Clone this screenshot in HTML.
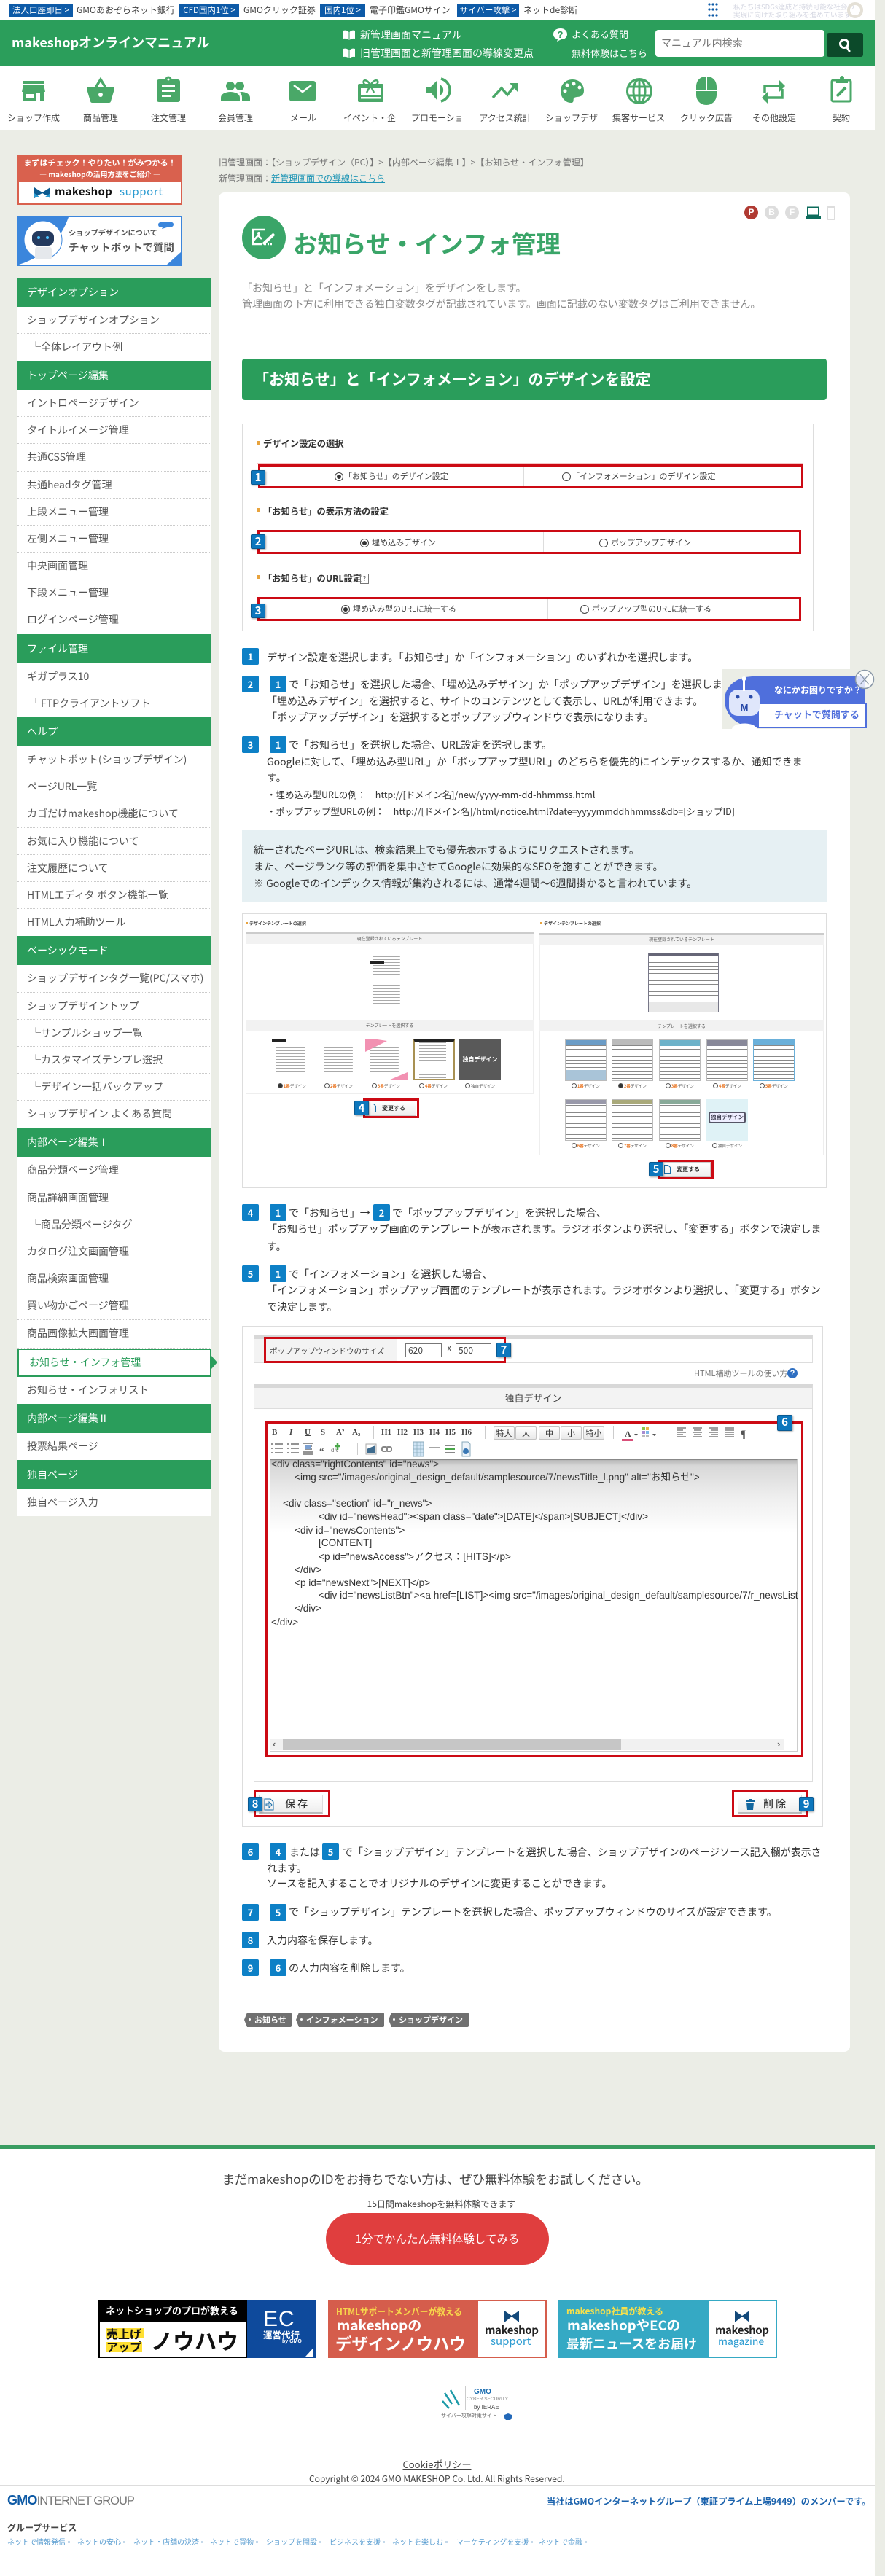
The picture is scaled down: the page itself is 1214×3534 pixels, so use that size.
<!DOCTYPE html>
<html lang="ja"><head><meta charset="utf-8"><title>お知らせ・インフォ管理</title>
<style>
html,body{margin:0;padding:0;width:1214px;height:3534px;overflow:hidden;background:#ebede6}
body{position:relative;font-family:"Noto Sans CJK JP","Liberation Sans",sans-serif;color:#444}
.a{position:absolute}
.t{position:absolute;white-space:nowrap;line-height:20px}
.box{position:absolute;box-sizing:border-box}
.tag{position:absolute;top:5px;height:18px;background:#0d5aa7;color:#fff;font-size:11.500px;line-height:18px;text-align:center;white-space:nowrap}
.gl{position:absolute;top:4px;font-size:12px;line-height:20px;color:#444;white-space:nowrap}
.nl{position:absolute;top:152px;width:72px;height:20px;overflow:hidden;text-align:center;font-size:12px;line-height:20px;color:#444;white-space:nowrap}
#side{position:absolute;left:24px;top:381px;width:266px;font-size:14px}
#side .h{height:40px;line-height:40px;background:#2a9d5b;color:#fff;padding-left:13px}
#side .i{height:37.2px;line-height:36px;background:#fff;color:#555;padding-left:13px;border-bottom:1px dotted #ccc;box-sizing:border-box;white-space:nowrap}
#side .s{padding-left:18px}
#side .e{border-bottom:0}
#side .on{height:39px;line-height:35px;border:2px solid #2a9d5b;padding-left:14px;color:#2a9d5b;position:relative;margin-top:1.800px}
.bd{position:absolute;width:23px;height:23px;background:#0d80c6;color:#fff;font-size:13px;font-weight:700;line-height:23px;text-align:center;border-radius:2px}
.l{position:absolute;white-space:nowrap;font-size:14px;line-height:22px;color:#333}
.ib{position:absolute;box-sizing:border-box;width:20px;height:20px;background:#0d77bd;border:1px solid #0a5a92;box-shadow:1px 1px 2px rgba(0,0,0,.35);color:#fff;font-weight:700;font-size:15px;line-height:18px;text-align:center;border-radius:2px}
.rb{position:absolute;box-sizing:border-box;border:3px solid #cc0a14;pointer-events:none}
.r{position:absolute;width:12px;height:12px;box-sizing:border-box;border:1px solid #444;border-radius:50%;background:#fff}
.r.c:after{content:"";position:absolute;left:2px;top:2px;width:6px;height:6px;background:#333;border-radius:50%}
.f{position:absolute;white-space:nowrap;font-size:11px;line-height:18px;color:#444}
.sl{position:absolute;white-space:nowrap;font-size:12.300px;font-weight:700;line-height:18px;color:#333}
.sq{position:absolute;width:5px;height:5px;background:#e8a33d}
.th{position:absolute;width:57px;height:57px;box-sizing:border-box;background:#fff repeating-linear-gradient(#aaa 0 1px,#fff 1px 4px);background-size:70% 100%;background-repeat:no-repeat;background-position:6px 0}
.pp{position:absolute;width:57px;height:57px;box-sizing:border-box;border:1px solid #bbb;background:repeating-linear-gradient(#fff 0 2px,#888 2px 3px,#fff 3px 5px)}
.pp i{position:absolute;left:0;right:0;top:0;height:6px;background:#9a9}
.pp u{position:absolute;left:0;right:0;bottom:0;height:8px;background:#ddd}
.ps{position:absolute;white-space:nowrap;font-size:5.500px;line-height:10px;color:#555}
.ps b{color:#e8701a}
.ps:before{content:"";display:inline-block;width:5px;height:5px;border:1px solid #555;border-radius:50%;margin-right:1px;vertical-align:-1px}
.ps.c:before{background:#333}
.gh{position:absolute;background:linear-gradient(#ccc 0,#ccc 3px,#f2f2f2 3px);font-size:6px;line-height:18px;text-align:center;color:#555}
.tb{position:absolute;top:0;font-size:11px;line-height:14px;color:#444;white-space:nowrap;font-family:"Liberation Serif",serif;font-weight:700}
.zb{position:absolute;box-sizing:border-box;height:18px;border:1px solid #c4c4c4;background:linear-gradient(#fff,#e9e9e9);border-radius:2px;font-size:11px;line-height:16px;text-align:center;color:#333;font-family:"Noto Sans CJK JP",sans-serif}
.sp{position:absolute;width:1px;height:17px;background:#ccc}
.code{position:absolute;white-space:nowrap;font-family:"Liberation Sans","Noto Sans CJK JP",sans-serif;font-size:13.600px;line-height:18px;color:#333}
.tg{position:absolute;top:2761px;height:20px;background:#707070;color:#fff;font-size:11px;font-weight:700;line-height:20px;padding-left:14px;box-sizing:border-box;white-space:nowrap;clip-path:polygon(4px 0,100% 0,100% 100%,4px 100%,0 50%);border-radius:2px}
.tg:before{content:"";position:absolute;left:6px;top:8px;width:3px;height:3px;background:#fff;border-radius:50%}
.lk{position:absolute;top:3477px;font-size:10px;line-height:20px;color:#5b9ed1;white-space:nowrap}
.lk:after{content:"";display:inline-block;width:3px;height:3px;background:#c5d9ea;margin-left:3px;vertical-align:2px}
</style></head><body>

<!-- GMO bar -->
<div class="box" style="left:0;top:0;width:1200px;height:28px;background:#fff"></div>
<div class="tag" style="left:12px;width:88px">法人口座即日 &gt;</div><div class="gl" style="left:105px">GMOあおぞらネット銀行</div>
<div class="tag" style="left:246px;width:82px">CFD国内1位 &gt;</div><div class="gl" style="left:334px">GMOクリック証券</div>
<div class="tag" style="left:439px;width:62px">国内1位 &gt;</div><div class="gl" style="left:507px">電子印鑑GMOサイン</div>
<div class="tag" style="left:627px;width:85px">サイバー攻撃 &gt;</div><div class="gl" style="left:718px">ネットde診断</div>
<svg class="a" style="left:970px;top:3px" width="18" height="22" fill="#0d5aa7"><circle cx="3" cy="3" r="1.600"/><circle cx="8" cy="3" r="1.600"/><circle cx="13" cy="3" r="1.600"/><circle cx="3" cy="10" r="1.600"/><circle cx="8" cy="10" r="1.600"/><circle cx="13" cy="10" r="1.600"/><circle cx="3" cy="18" r="1.600"/><circle cx="8" cy="18" r="1.600"/><circle cx="13" cy="18" r="1.600"/></svg>
<div class="a" style="left:1006px;top:4px;font-size:9.500px;line-height:11px;color:#d5d7e2;white-space:nowrap">私たちはSDGs達成と持続可能な社会の<br>実現に向けた取り組みを進めています</div>
<div class="a" style="left:1162px;top:3px;width:22px;height:22px;border-radius:50%;box-sizing:border-box;border:4px solid #e4e0d6"></div>

<!-- Green header -->
<div class="box" style="left:0;top:28px;width:1200px;height:62px;background:#2b9e5b"></div>
<div class="t" style="left:16px;top:48px;font-size:18px;font-weight:700;color:#fff">makeshopオンラインマニュアル</div>
<svg class="a" style="left:470px;top:40px" width="18" height="16" fill="#fff"><path d="M1 2C4 1 7 2 8.500 4V15C7 13 4 12.500 1 13ZM17 2C14 1 11 2 9.500 4V15C11 13 14 12.500 17 13Z"/></svg>
<svg class="a" style="left:470px;top:65px" width="18" height="16" fill="#fff"><path d="M1 2C4 1 7 2 8.500 4V15C7 13 4 12.500 1 13ZM17 2C14 1 11 2 9.500 4V15C11 13 14 12.500 17 13Z"/></svg>
<div class="t" style="left:494px;top:38px;font-size:14px;color:#fff">新管理画面マニュアル</div>
<div class="t" style="left:494px;top:63px;font-size:14px;color:#fff">旧管理画面と新管理画面の導線変更点</div>
<svg class="a" style="left:758px;top:38px" width="22" height="20"><path d="M11 1C5 1 1 4 1 9C1 13 4 15 7 16L6 19L12 16C17 16 20 13 20 9C20 4 16 1 11 1Z" fill="#fff"/><text x="10.500" y="14" font-size="13" font-weight="700" text-anchor="middle" fill="#2b9e5b" font-family="Liberation Sans">?</text></svg>
<div class="t" style="left:784px;top:37px;font-size:13px;color:#fff">よくある質問</div>
<div class="t" style="left:784px;top:63px;font-size:13px;color:#fff">無料体験はこちら</div>
<div class="box" style="left:899px;top:41px;width:232px;height:37px;background:#fff;border-radius:4px;font-size:14px;line-height:37px;padding-left:8px;color:#777">マニュアル内検索</div>
<div class="box" style="left:1134px;top:45px;width:50px;height:33px;background:#0c4a2a;border-radius:3px"></div>
<svg class="a" style="left:1149px;top:52px" width="20" height="20" fill="none" stroke="#fff" stroke-width="3"><circle cx="9" cy="8" r="5.500"/><path d="M12.500 12.500L16 18" stroke-linecap="round"/></svg>

<!-- Nav -->
<div class="box" style="left:0;top:90px;width:1200px;height:89px;background:#fff"></div>
<svg class="a" style="left:0;top:0" width="1200" height="150" fill="#4aa868">
<rect x="32" y="111" width="28" height="4"/><path d="M32 116H60L62 126H30Z"/><path d="M32 126H60V139H55V128H49V139H32ZM35 129V134H46V129Z" fill-rule="evenodd"/>
<path d="M130 122L138 109L146 122" fill="none" stroke="#4aa868" stroke-width="3.500"/><path d="M120 120H156C157 120 157 121 157 122L152 139C151.500 140.500 151 141 149 141H127C125 141 124.500 140.500 124 139L119 122C119 121 119 120 120 120Z"/><circle cx="138" cy="130" r="3" fill="#fff"/>
<rect x="215" y="109" width="32" height="31" rx="3"/><circle cx="231" cy="109" r="4.500"/><circle cx="231" cy="109" r="1.500" fill="#fff"/><g fill="#fff"><rect x="222" y="116" width="18" height="3"/><rect x="222" y="123" width="18" height="3"/><rect x="222" y="130" width="12" height="3"/></g>
<circle cx="316" cy="118" r="6"/><circle cx="329" cy="118" r="6"/><path d="M303 138V134C303 128 311 126 316 126C321 126 329 128 329 134V138Z"/><path d="M331 126C337 126 343 129 343 134V138H332V134C332 131 331 128 328 127Z"/>
<rect x="397" y="111" width="36" height="28" rx="3"/><path d="M403 117L415 126L427 117" fill="none" stroke="#fff" stroke-width="2.500"/>
<rect x="491" y="115" width="35" height="25" rx="2"/><rect x="495" y="121" width="27" height="9" fill="#fff"/><rect x="495" y="133" width="27" height="2.500" fill="#fff"/><path d="M508 117C504 108 497 109 499 114C500 117 504 117 508 117C512 117 517 117 518 114C520 109 513 108 508 117ZM508 117L503 127M508 117L513 127" fill="none" stroke="#4aa868" stroke-width="2.500"/>
<path d="M584 119H591L600 110V138L591 127H584Z"/><path d="M603 116A8 8 0 0 1 603 131Z"/><path d="M605 108A16 16 0 0 1 605 139" fill="none" stroke="#4aa868" stroke-width="3.500"/>
<path d="M676 134L688 121L696 130L706 118" fill="none" stroke="#4aa868" stroke-width="3.500"/><path d="M699 114H710V126Z"/>
<path d="M785 109C776 109 769 116 769 125C769 134 776 141 783 141C788 141 786 137 787 135C789 131 801 136 801 124C801 115 794 109 785 109Z"/><g fill="#fff"><circle cx="778" cy="117" r="2.500"/><circle cx="787" cy="115" r="2.500"/><circle cx="795" cy="120" r="2.500"/><circle cx="775" cy="125" r="2.500"/></g>
<g fill="none" stroke="#4aa868" stroke-width="3"><circle cx="877" cy="125" r="16.500"/><ellipse cx="877" cy="125" rx="8" ry="16"/><path d="M861 119H893M861 131H893M877 109V141"/></g>
<path d="M968 105C960 105 955 111 955 119V123H968ZM970 105C978 105 983 111 983 119V123H970ZM955 125H983V130C983 138 977 144 969 144C961 144 955 138 955 130Z"/>
<path d="M1049 128V118H1069M1073 122V134H1052" fill="none" stroke="#4aa868" stroke-width="3.500"/><path d="M1068 109L1077 118L1068 127ZM1054 125L1045 134L1054 143Z"/>
<rect x="1141" y="110" width="26" height="29" rx="2" fill="none" stroke="#4aa868" stroke-width="3"/><rect x="1147" y="108" width="16" height="6"/><circle cx="1155" cy="107" r="3"/><path d="M1148 132L1160 120" stroke="#4aa868" stroke-width="4"/>
</svg>
<div class="nl" style="left:10px">ショップ作成</div><div class="nl" style="left:102px">商品管理</div><div class="nl" style="left:195px">注文管理</div><div class="nl" style="left:287px">会員管理</div><div class="nl" style="left:380px">メール</div><div class="nl" style="left:471px">イベント・企画</div><div class="nl" style="left:564px">プロモーション</div><div class="nl" style="left:657px">アクセス統計</div><div class="nl" style="left:748px">ショップデザイン</div><div class="nl" style="left:840px">集客サービス</div><div class="nl" style="left:933px">クリック広告</div><div class="nl" style="left:1026px">その他設定</div><div class="nl" style="left:1118px">契約</div>

<!-- Left banners -->
<div class="box" style="left:24px;top:212px;width:226px;height:69px;background:#d9614e"></div>
<div class="t" style="left:24px;width:226px;text-align:center;top:213px;font-size:11px;font-weight:700;color:#fff">まずはチェック！やりたい！がみつかる！</div>
<div class="t" style="left:24px;width:226px;text-align:center;top:229px;font-size:10px;font-weight:700;color:#fff">― makeshopの活用方法をご紹介 ―</div>
<div class="box" style="left:26px;top:250px;width:222px;height:29px;background:#fff"></div>
<svg class="a" style="left:46px;top:256px" width="24" height="16"><path d="M1 1L12 8L23 1V15L12 9L1 15Z" fill="#0d5a8f"/><path d="M1 9L8 14H1ZM23 9L16 14H23Z" fill="#2b9bd1"/></svg>
<div class="t" style="left:75px;top:253px;font-size:15px;font-weight:700;color:#111;letter-spacing:.3px">makeshop</div>
<div class="t" style="left:164px;top:253px;font-size:15px;color:#2b9bd1;letter-spacing:.6px">support</div>
<div class="box" style="left:24px;top:296px;width:226px;height:69px;background:#fff;border:2px solid #3b86dc"></div>
<svg class="a" style="left:24px;top:296px" width="226" height="69"><path d="M2 2H70C60 30 40 55 2 67Z" fill="#3b86dc"/><path d="M205 67L224 50V67Z" fill="#3b86dc"/><circle cx="35" cy="33" r="26" fill="#fff" stroke="#3b86dc" stroke-width="1"/><rect x="20" y="21" width="30" height="20" rx="8" fill="#243a5e"/><circle cx="29" cy="30" r="2" fill="#4cc4ff"/><circle cx="41" cy="30" r="2" fill="#4cc4ff"/><rect x="24" y="43" width="23" height="17" rx="3" fill="#e5e8ec"/><path d="M193 12C193 9 197 8 205 8C213 8 214 10 214 12C214 15 211 16 205 16L198 18L199 16C195 16 193 15 193 12Z" fill="#3b86dc"/></svg>
<div class="t" style="left:94px;top:309px;font-size:10.200px;font-weight:700;color:#555">ショップデザインについて</div>
<div class="t" style="left:94px;top:330px;font-size:14.500px;font-weight:700;color:#555">チャットボットで質問</div>

<!-- Sidebar -->
<div id="side">
<div class="h">デザインオプション</div><div class="i">ショップデザインオプション</div><div class="i s e">└全体レイアウト例</div>
<div class="h" style="height:39.600px">トップページ編集</div><div class="i">イントロページデザイン</div><div class="i">タイトルイメージ管理</div><div class="i">共通CSS管理</div><div class="i">共通headタグ管理</div><div class="i">上段メニュー管理</div><div class="i">左側メニュー管理</div><div class="i">中央画面管理</div><div class="i">下段メニュー管理</div><div class="i e">ログインページ管理</div>
<div class="h">ファイル管理</div><div class="i">ギガプラス10</div><div class="i s e">└FTPクライアントソフト</div>
<div class="h">ヘルプ</div><div class="i">チャットボット(ショップデザイン)</div><div class="i">ページURL一覧</div><div class="i">カゴだけmakeshop機能について</div><div class="i">お気に入り機能について</div><div class="i">注文履歴について</div><div class="i">HTMLエディタ ボタン機能一覧</div><div class="i e">HTML入力補助ツール</div>
<div class="h">ベーシックモード</div><div class="i">ショップデザインタグ一覧(PC/スマホ)</div><div class="i">ショップデザイントップ</div><div class="i s">└サンプルショップ一覧</div><div class="i s">└カスタマイズテンプレ選択</div><div class="i s">└デザイン一括バックアップ</div><div class="i e">ショップデザイン よくある質問</div>
<div class="h">内部ページ編集Ⅰ</div><div class="i">商品分類ページ管理</div><div class="i">商品詳細画面管理</div><div class="i s">└商品分類ページタグ</div><div class="i">カタログ注文画面管理</div><div class="i">商品検索画面管理</div><div class="i">買い物かごページ管理</div><div class="i" style="height:39px">商品画像拡大画面管理</div>
<div class="i on" style="margin-top:0">お知らせ・インフォ管理<div class="a" style="left:264px;top:8px;width:0;height:0;border-left:8px solid #2a9d5b;border-top:9px solid transparent;border-bottom:9px solid transparent"></div></div>
<div class="i e">お知らせ・インフォリスト</div>
<div class="h">内部ページ編集Ⅱ</div><div class="i e">投票結果ページ</div>
<div class="h">独自ページ</div><div class="i e">独自ページ入力</div>
</div>

<!-- Main card -->
<div class="t" style="left:300px;top:213px;font-size:12px;color:#777">旧管理画面：【ショップデザイン（PC）】&gt;【内部ページ編集Ⅰ】&gt;【お知らせ・インフォ管理】</div>
<div class="t" style="left:300px;top:235px;font-size:12px;color:#777">新管理画面：<span style="color:#1e95b5;text-decoration:underline">新管理画面での導線はこちら</span></div>
<div class="box" style="left:300px;top:264px;width:866px;height:2551px;background:#fff;border-radius:8px"></div>

<div class="a" style="left:1021px;top:282px;width:19px;height:19px;border-radius:50%;background:#b03a32;color:#fff;font:700 12px/19px 'Liberation Sans',sans-serif;text-align:center">P</div>
<div class="a" style="left:1049px;top:282px;width:19px;height:19px;border-radius:50%;background:#ddd;color:#fff;font:700 12px/19px 'Liberation Sans',sans-serif;text-align:center">B</div>
<div class="a" style="left:1077px;top:282px;width:19px;height:19px;border-radius:50%;background:#ddd;color:#fff;font:700 12px/19px 'Liberation Sans',sans-serif;text-align:center">F</div>
<svg class="a" style="left:1105px;top:283px" width="21" height="18"><rect x="3" y="1.500" width="15" height="11" fill="#fff" stroke="#0e6c5c" stroke-width="2"/><path d="M0 14H21V18H0Z" fill="#0e6c5c"/></svg>
<div class="box" style="left:1134px;top:283px;width:12px;height:19px;background:#fff;border:2px solid #ddd;border-radius:2px"></div>

<div class="a" style="left:332px;top:296px;width:60px;height:60px;border-radius:50%;background:#3aa568"></div>
<svg class="a" style="left:345px;top:313px" width="34" height="26" fill="none" stroke="#fff" stroke-width="2.500"><path d="M19 2H2V22H14"/><path d="M2 18L9 10L14 15"/><circle cx="10" cy="7" r="2" fill="#fff" stroke="none"/><path d="M16 22L31 8" stroke-width="4"/><path d="M18 22H24M26 22H28" stroke-dasharray="2 2"/></svg>
<div class="a" style="left:402px;top:308px;font-size:33.500px;font-weight:700;line-height:50px;color:#3aa568;white-space:nowrap">お知らせ・インフォ管理</div>

<div class="t" style="left:332px;top:385px;font-size:14px;color:#888">「お知らせ」と「インフォメーション」をデザインをします。</div>
<div class="t" style="left:332px;top:407px;font-size:14px;color:#888">管理画面の下方に利用できる独自変数タグが記載されています。画面に記載のない変数タグはご利用できません。</div>

<div class="box" style="left:332px;top:492px;width:802px;height:57px;background:#2a9d5b;border-radius:4px"></div>
<div class="a" style="left:348px;top:500px;font-size:21px;font-weight:700;line-height:40px;color:#fff;white-space:nowrap">「お知らせ」と「インフォメーション」のデザインを設定</div>

<!-- Screenshot 1 -->
<div class="box" style="left:332px;top:581px;width:784px;height:285px;border:1px solid #ddd"></div>
<div class="sq" style="left:352px;top:605px"></div><div class="sl" style="left:361px;top:599px">デザイン設定の選択</div>
<div class="sq" style="left:352px;top:697px"></div><div class="sl" style="left:361px;top:692px">「お知らせ」の表示方法の設定</div>
<div class="sq" style="left:352px;top:789px"></div><div class="sl" style="left:361px;top:784px">「お知らせ」のURL設定</div>
<div class="box" style="left:494px;top:787px;width:12px;height:14px;border:1px solid #777;font-size:9px;line-height:12px;text-align:center;color:#555">?</div>
<div class="box" style="left:352px;top:635px;width:749px;height:2px;background:#f5c5c5"></div>
<div class="rb" style="left:354px;top:637px;width:748px;height:33px"></div>
<div class="box" style="left:718px;top:640px;width:1px;height:27px;background:#ddd"></div>
<div class="r c" style="left:459px;top:648px"></div><div class="f" style="left:472px;top:644px">「お知らせ」のデザイン設定</div>
<div class="r" style="left:771px;top:648px"></div><div class="f" style="left:784px;top:644px">「インフォメーション」のデザイン設定</div>
<div class="rb" style="left:353px;top:727px;width:746px;height:33px"></div>
<div class="box" style="left:745px;top:730px;width:1px;height:27px;background:#ddd"></div>
<div class="r c" style="left:494px;top:739px"></div><div class="f" style="left:510px;top:735px">埋め込みデザイン</div>
<div class="r" style="left:822px;top:739px"></div><div class="f" style="left:838px;top:735px">ポップアップデザイン</div>
<div class="rb" style="left:353px;top:819px;width:746px;height:33px"></div>
<div class="box" style="left:751px;top:822px;width:1px;height:27px;background:#ddd"></div>
<div class="r c" style="left:468px;top:830px"></div><div class="f" style="left:484px;top:826px">埋め込み型のURLに統一する</div>
<div class="r" style="left:796px;top:830px"></div><div class="f" style="left:812px;top:826px">ポップアップ型のURLに統一する</div>
<div class="ib" style="left:344px;top:645px">1</div><div class="ib" style="left:344px;top:733px">2</div><div class="ib" style="left:344px;top:828px">3</div>

<!-- Steps 1-3 -->
<div class="bd" style="left:332px;top:889px">1</div><div class="l" style="left:366px;top:891px">デザイン設定を選択します。「お知らせ」か「インフォメーション」のいずれかを選択します。</div>
<div class="bd" style="left:332px;top:927px">2</div><div class="bd" style="left:370px;top:927px">1</div><div class="l" style="left:396px;top:928px">で「お知らせ」を選択した場合、「埋め込みデザイン」か「ポップアップデザイン」を選択します。</div>
<div class="l" style="left:366px;top:951px">「埋め込みデザイン」を選択すると、サイトのコンテンツとして表示し、URLが利用できます。</div>
<div class="l" style="left:366px;top:973px">「ポップアップデザイン」を選択するとポップアップウィンドウで表示になります。</div>
<div class="bd" style="left:332px;top:1010px">3</div><div class="bd" style="left:370px;top:1010px">1</div><div class="l" style="left:396px;top:1011px">で「お知らせ」を選択した場合、URL設定を選択します。</div>
<div class="l" style="left:366px;top:1034px">Googleに対して、「埋め込み型URL」か「ポップアップ型URL」のどちらを優先的にインデックスするか、通知できま</div>
<div class="l" style="left:366px;top:1056px">す。</div>
<div class="l" style="left:366px;top:1079px;font-size:12.500px">・埋め込み型URLの例：　http://[ドメイン名]/new/yyyy-mm-dd-hhmmss.html</div>
<div class="l" style="left:366px;top:1102px;font-size:12.500px">・ポップアップ型URLの例：　http://[ドメイン名]/html/notice.html?date=yyyymmddhhmmss&amp;db=[ショップID]</div>
<div class="box" style="left:332px;top:1138px;width:802px;height:99px;background:#e6f0f3"></div>
<div class="l" style="left:348px;top:1155px">統一されたページURLは、検索結果上でも優先表示するようにリクエストされます。</div>
<div class="l" style="left:348px;top:1178px">また、ページランク等の評価を集中させてGoogleに効果的なSEOを施すことができます。</div>
<div class="l" style="left:348px;top:1201px">※ Googleでのインデックス情報が集約されるには、通常4週間～6週間掛かると言われています。</div>

<!-- Screenshot 2 -->
<div class="box" style="left:332px;top:1253px;width:802px;height:377px;border:1px solid #ddd"></div>
<div class="sq" style="left:337px;top:1265px;width:3px;height:3px"></div><div class="a" style="left:342px;top:1261px;font-size:6px;font-weight:700;line-height:12px;white-space:nowrap;color:#444">デザインテンプレートの選択</div>
<div class="sq" style="left:741px;top:1265px;width:3px;height:3px"></div><div class="a" style="left:746px;top:1261px;font-size:6px;font-weight:700;line-height:12px;white-space:nowrap;color:#444">デザインテンプレートの選択</div>
<div class="box" style="left:337px;top:1279px;width:395px;height:222px;border:1px solid #eee"></div>
<div class="gh" style="left:337px;top:1279px;width:395px;height:16px">現在登録されているテンプレート</div>
<div class="gh" style="left:337px;top:1399px;width:395px;height:15px;background:#f2f2f2;line-height:15px">テンプレートを選択する</div>
<div class="th" style="left:505px;top:1312px;width:54px;height:65px"></div>
<div class="box" style="left:507px;top:1319px;width:20px;height:3px;background:#222"></div>
<div class="th" style="left:373px;top:1425px"></div><div class="box" style="left:373px;top:1426px;width:20px;height:3px;background:#222"></div>
<div class="th" style="left:438px;top:1425px"></div>
<div class="th" style="left:501px;top:1425px"></div><svg class="a" style="left:501px;top:1425px" width="58" height="57"><path d="M0 0H10L30 3L0 18Z" fill="#f291b2"/><path d="M58 46V57H32Z" fill="#f291b2"/></svg>
<div class="th" style="left:567px;top:1425px;border:2px solid #a89153;border-top:5px solid #222"></div>
<div class="box" style="left:630px;top:1425px;width:57px;height:57px;background:#595959;color:#fff;font-size:8px;font-weight:700;line-height:57px;text-align:center;white-space:nowrap">独自デザイン</div>
<div class="ps c" style="left:381px;top:1485px"><b>1番</b>デザイン</div><div class="ps" style="left:445px;top:1485px"><b>2番</b>デザイン</div><div class="ps" style="left:510px;top:1485px"><b>3番</b>デザイン</div><div class="ps" style="left:575px;top:1485px"><b>4番</b>デザイン</div><div class="ps" style="left:638px;top:1485px">独自デザイン</div>
<div class="box" style="left:501px;top:1510px;width:70px;height:21px;background:linear-gradient(#fff,#eee);border:1px solid #ccc;font-size:8px;font-weight:700;line-height:19px;padding-left:22px;white-space:nowrap;color:#333">変更する</div>
<svg class="a" style="left:507px;top:1514px" width="9" height="12" fill="none" stroke="#1b6ea8"><path d="M.5.5h5l3 3v8h-8z"/></svg>
<div class="rb" style="left:498px;top:1507px;width:77px;height:27px"></div>
<div class="ib" style="left:486px;top:1510px">4</div>

<div class="box" style="left:740px;top:1280px;width:390px;height:305px;border:1px solid #eee"></div>
<div class="gh" style="left:740px;top:1280px;width:390px;height:16px">現在登録されているテンプレート</div>
<div class="gh" style="left:740px;top:1400px;width:390px;height:15px;background:#f2f2f2;line-height:15px">テンプレートを選択する</div>
<div class="pp" style="left:889px;top:1307px;width:97px;height:82px;border:1px solid #778"><i style="background:#667;height:4px"></i><u style="height:14px;background:#e8e8e8"></u></div>
<div class="pp" style="left:775px;top:1426px"><i style="background:#6b9cc6;height:7px"></i><u style="background:#a9c4d8;height:14px"></u></div>
<div class="pp" style="left:839px;top:1426px"><i style="background:#bbb"></i></div>
<div class="pp" style="left:904px;top:1426px"><i style="background:#6db2c9;height:8px"></i></div>
<div class="pp" style="left:969px;top:1426px"><i style="background:#889;height:8px"></i></div>
<div class="pp" style="left:1033px;top:1426px;border-color:#6ab0da"><i style="background:#6ab0da"></i></div>
<div class="ps" style="left:784px;top:1485px"><b>1番</b>デザイン</div><div class="ps c" style="left:848px;top:1485px"><b>2番</b>デザイン</div><div class="ps" style="left:913px;top:1485px"><b>3番</b>デザイン</div><div class="ps" style="left:978px;top:1485px"><b>4番</b>デザイン</div><div class="ps" style="left:1042px;top:1485px"><b>5番</b>デザイン</div>
<div class="pp" style="left:775px;top:1508px"><i style="background:#99a"></i></div>
<div class="pp" style="left:839px;top:1508px"><i style="background:#a9a97a"></i></div>
<div class="pp" style="left:904px;top:1508px"><i style="background:#8a9"></i></div>
<div class="box" style="left:969px;top:1508px;width:57px;height:57px;background:#dff2f6"></div>
<div class="box" style="left:972px;top:1525px;width:51px;height:16px;background:#eef;border:2px solid #556;border-radius:3px;font-size:7.500px;font-weight:700;line-height:12px;text-align:center;color:#445;white-space:nowrap">独自デザイン</div>
<div class="ps" style="left:784px;top:1567px"><b>6番</b>デザイン</div><div class="ps" style="left:848px;top:1567px"><b>7番</b>デザイン</div><div class="ps" style="left:913px;top:1567px"><b>8番</b>デザイン</div><div class="ps" style="left:977px;top:1567px">独自デザイン</div>
<div class="box" style="left:905px;top:1594px;width:70px;height:21px;background:linear-gradient(#fff,#eee);border:1px solid #ccc;font-size:8px;font-weight:700;line-height:19px;padding-left:22px;white-space:nowrap;color:#333">変更する</div>
<svg class="a" style="left:911px;top:1598px" width="9" height="12" fill="none" stroke="#1b6ea8"><path d="M.5.5h5l3 3v8h-8z"/></svg>
<div class="rb" style="left:902px;top:1591px;width:77px;height:27px"></div>
<div class="ib" style="left:890px;top:1594px">5</div>

<!-- Steps 4-5 -->
<div class="bd" style="left:332px;top:1652px">4</div><div class="bd" style="left:370px;top:1652px">1</div><div class="l" style="left:396px;top:1653px">で「お知らせ」→</div><div class="bd" style="left:512px;top:1652px">2</div><div class="l" style="left:538px;top:1653px">で「ポップアップデザイン」を選択した場合、</div>
<div class="l" style="left:366px;top:1675px">「お知らせ」ポップアップ画面のテンプレートが表示されます。ラジオボタンより選択し、「変更する」ボタンで決定しま</div>
<div class="l" style="left:366px;top:1699px">す。</div>
<div class="bd" style="left:332px;top:1736px">5</div><div class="bd" style="left:370px;top:1736px">1</div><div class="l" style="left:396px;top:1737px">で「インフォメーション」を選択した場合、</div>
<div class="l" style="left:366px;top:1759px">「インフォメーション」ポップアップ画面のテンプレートが表示されます。ラジオボタンより選択し、「変更する」ボタン</div>
<div class="l" style="left:366px;top:1782px">で決定します。</div>

<!-- Screenshot 3 -->
<div class="box" style="left:332px;top:1819px;width:797px;height:687px;border:1px solid #ddd"></div>
<div class="box" style="left:348px;top:1832px;width:767px;height:38px;border:1px solid #ddd;border-top:5px solid #d8d8d8"></div>
<div class="box" style="left:349px;top:1837px;width:195px;height:32px;background:#f3f3f3"></div>
<div class="f" style="left:370px;top:1845px;font-size:10.500px">ポップアップウィンドウのサイズ</div>
<div class="box" style="left:556px;top:1843px;width:50px;height:19px;border:1px solid #777;font:12px/17px 'Noto Sans CJK JP',sans-serif;padding-left:3px">620</div>
<div class="f" style="left:613px;top:1841px">X</div>
<div class="box" style="left:625px;top:1843px;width:49px;height:19px;border:1px solid #777;font:12px/17px 'Noto Sans CJK JP',sans-serif;padding-left:3px">500</div>
<div class="rb" style="left:362px;top:1834px;width:332px;height:36px"></div>
<div class="ib" style="left:681px;top:1842px">7</div>
<div class="a" style="left:952px;top:1875px;font-size:11px;line-height:18px;color:#777;white-space:nowrap">HTML補助ツールの使い方</div>
<div class="a" style="left:1080px;top:1877px;width:14px;height:14px;border-radius:50%;background:#2e6fc2;color:#fff;font:700 11px/14px 'Liberation Sans',sans-serif;text-align:center">?</div>
<div class="box" style="left:348px;top:1899px;width:767px;height:546px;border:1px solid #ddd;border-top:5px solid #d8d8d8"></div>
<div class="box" style="left:349px;top:1904px;width:765px;height:29px;background:#f3f3f3;border-bottom:1px solid #ddd;font-size:13px;line-height:28px;text-align:center;color:#444">独自デザイン</div>

<!-- Toolbar -->
<div class="a" style="left:364px;top:1958px;width:738px;height:14px">
<span class="tb" style="left:9px">B</span><span class="tb" style="left:33px;font-style:italic">I</span><span class="tb" style="left:54px;text-decoration:underline">U</span><span class="tb" style="left:76px;text-decoration:line-through">S</span><span class="tb" style="left:97px">A²</span><span class="tb" style="left:119px">A₂</span>
<span class="tb" style="left:159px">H1</span><span class="tb" style="left:181px">H2</span><span class="tb" style="left:203px">H3</span><span class="tb" style="left:225px">H4</span><span class="tb" style="left:247px">H5</span><span class="tb" style="left:269px">H6</span>
</div>
<div class="sp" style="left:512px;top:1957px"></div><div class="sp" style="left:665px;top:1957px"></div><div class="sp" style="left:841px;top:1957px"></div><div class="sp" style="left:916px;top:1957px"></div>
<div class="sp" style="left:490px;top:1979px"></div><div class="sp" style="left:555px;top:1979px"></div>
<div class="zb" style="left:677px;top:1957px;width:29px">特大</div><div class="zb" style="left:707px;top:1957px;width:29px">大</div><div class="zb" style="left:739px;top:1957px;width:29px">中</div><div class="zb" style="left:769px;top:1957px;width:29px">小</div><div class="zb" style="left:800px;top:1957px;width:29px">特小</div>
<svg class="a" style="left:360px;top:1950px" width="700" height="60">
<text x="497" y="21" font-size="12" font-weight="700" fill="#444" font-family="Liberation Serif">A</text><rect x="493" y="24" width="15" height="3" fill="#d9507a"/><path d="M510 17h5l-2.500 3z" fill="#555"/>
<g fill="#bbb"><rect x="521" y="8" width="4" height="4" fill="#8bc34a"/><rect x="526" y="8" width="4" height="4" fill="#e8b64a"/><rect x="521" y="13" width="4" height="4" fill="#a88bd0"/><rect x="526" y="13" width="4" height="4" fill="#7cb7e8"/><rect x="521" y="18" width="4" height="4"/><rect x="526" y="18" width="4" height="4"/></g><path d="M535 17h5l-2.500 3z" fill="#555"/>
<g stroke="#666" stroke-width="1.200" fill="none"><path d="M568 9h13M568 12h9M568 15h13M568 18h9M568 21h13"/><path d="M590 9h13M592 12h9M590 15h13M592 18h9M590 21h13"/><path d="M612 9h13M616 12h9M612 15h13M616 18h9M612 21h13"/><path d="M634 9h13M634 12h13M634 15h13M634 18h13M634 21h13"/></g>
<text x="656" y="22" font-size="15" fill="#555" font-family="Liberation Serif">¶</text>
<g stroke="#555" stroke-width="1.300" fill="none"><path d="M12 31h2M17 31h11M12 37h2M17 37h11M12 43h2M17 43h11M34 31h2M39 31h11M34 37h2M39 37h11M34 43h2M39 43h11"/><path d="M56 30h13M59 34h9M59 38h9M56 42h13M56 45h13"/></g>
<rect x="59" y="33" width="7" height="5" fill="#7b9fd0"/>
<text x="78" y="45" font-size="13" font-weight="700" fill="#555" font-family="Liberation Serif">“</text>
<text x="94" y="42" font-size="8" fill="#777" font-family="Liberation Sans">div</text><path d="M103 30v9M99 34h8" stroke="#4aa84a" stroke-width="2.500"/>
<rect x="142" y="31" width="14" height="14" fill="#fff" stroke="#aaa"/><path d="M143 38l12-5v11h-12z" fill="#3e6b8e"/>
<rect x="164" y="35" width="7" height="6" rx="2" fill="none" stroke="#888" stroke-width="2"/><rect x="170" y="35" width="7" height="6" rx="2" fill="none" stroke="#888" stroke-width="2"/>
<rect x="207" y="28" width="14" height="20" fill="#cfe4f5" stroke="#8ab"/><path d="M207 33h14M207 38h14M207 43h14M212 28v20M217 28v20" stroke="#8ab" stroke-width=".7"/>
<path d="M229 36h15" stroke="#888" stroke-width="1.500"/>
<path d="M251 33h13M251 43h13" stroke="#888" stroke-width="2"/><path d="M251 38h13" stroke="#4aa84a" stroke-width="2"/>
<path d="M274 28h8l3 3v17h-11z" fill="#eef4fa" stroke="#8ab"/><circle cx="279" cy="41" r="4" fill="#3a78b5"/>
</svg>

<!-- Text area -->
<div class="box" style="left:370px;top:2001px;width:724px;height:402px;border:1px solid #ccc;border-top:2px solid #888;background:linear-gradient(#b5b5b5 0,#d8d8d8 8px,#eee 50px,#fff 100px);overflow:hidden"></div>
<div class="a" style="left:370px;top:2001px;width:724px;height:385px;overflow:hidden">
<div class="code" style="left:2px;top:-1px">&lt;div class="rightContents" id="news"&gt;</div>
<div class="code" style="left:34px;top:17px">&lt;img src="/images/original_design_default/samplesource/7/newsTitle_l.png" alt="お知らせ"&gt;</div>
<div class="code" style="left:18px;top:53px">&lt;div class="section" id="r_news"&gt;</div>
<div class="code" style="left:67px;top:71px">&lt;div id="newsHead"&gt;&lt;span class="date"&gt;[DATE]&lt;/span&gt;[SUBJECT]&lt;/div&gt;</div>
<div class="code" style="left:34px;top:90px">&lt;div id="newsContents"&gt;</div>
<div class="code" style="left:67px;top:107px">[CONTENT]</div>
<div class="code" style="left:67px;top:126px">&lt;p id="newsAccess"&gt;アクセス：[HITS]&lt;/p&gt;</div>
<div class="code" style="left:34px;top:144px">&lt;/div&gt;</div>
<div class="code" style="left:34px;top:162px">&lt;p id="newsNext"&gt;[NEXT]&lt;/p&gt;</div>
<div class="code" style="left:67px;top:179px">&lt;div id="newsListBtn"&gt;&lt;a href=[LIST]&gt;&lt;img src="/images/original_design_default/samplesource/7/r_newsList_btn.png"&gt;&lt;/a&gt;&lt;/div&gt;</div>
<div class="code" style="left:34px;top:197px">&lt;/div&gt;</div>
<div class="code" style="left:2px;top:216px">&lt;/div&gt;</div>
</div>
<div class="box" style="left:371px;top:2386px;width:705px;height:15px;background:#f1f1f1"></div>
<div class="box" style="left:388px;top:2386px;width:464px;height:15px;background:#c6c6c6"></div>
<div class="a" style="left:374px;top:2385px;font:700 13px/16px 'Liberation Sans',sans-serif;color:#666">‹</div>
<div class="a" style="left:1066px;top:2385px;font:700 13px/16px 'Liberation Sans',sans-serif;color:#666">›</div>
<div class="rb" style="left:364px;top:1950px;width:738px;height:460px"></div>
<div class="ib" style="left:1066px;top:1941px;width:21px;height:22px">6</div>

<!-- Save/delete -->
<div class="box" style="left:355px;top:2462px;width:88px;height:26px;background:linear-gradient(#fff,#eee);border:1px solid #ddd;border-bottom:2px solid #bbb;font-size:14px;font-weight:500;line-height:25px;padding-left:35px;white-space:nowrap;color:#333">保 存</div>
<svg class="a" style="left:362px;top:2467px" width="14" height="17" fill="none" stroke="#1b6ea8"><path d="M1 1h8l4 4v11H1zM3 8h4V5l4 4-4 4v-3H3z"/></svg>
<div class="rb" style="left:348px;top:2456px;width:105px;height:37px"></div>
<div class="ib" style="left:340px;top:2465px">8</div>
<div class="box" style="left:1012px;top:2462px;width:88px;height:26px;background:linear-gradient(#fff,#eee);border:1px solid #ddd;border-bottom:2px solid #bbb;font-size:14px;font-weight:500;line-height:25px;padding-left:34px;white-space:nowrap;color:#333">削 除</div>
<svg class="a" style="left:1023px;top:2468px" width="12" height="15" fill="#13679f"><path d="M0 2h12v2H0zM4 0h4v2H4zM1 5h10l-1 10H2z"/></svg>
<div class="rb" style="left:1004px;top:2456px;width:104px;height:37px"></div>
<div class="ib" style="left:1096px;top:2465px">9</div>

<!-- Steps 6-9 -->
<div class="bd" style="left:332px;top:2529px">6</div><div class="bd" style="left:370px;top:2529px">4</div><div class="l" style="left:397px;top:2530px">または</div><div class="bd" style="left:442px;top:2529px">5</div><div class="l" style="left:470px;top:2530px">で「ショップデザイン」テンプレートを選択した場合、ショップデザインのページソース記入欄が表示さ</div>
<div class="l" style="left:366px;top:2552px">れます。</div>
<div class="l" style="left:366px;top:2573px">ソースを記入することでオリジナルのデザインに変更することができます。</div>
<div class="bd" style="left:332px;top:2612px">7</div><div class="bd" style="left:370px;top:2612px">5</div><div class="l" style="left:396px;top:2612px">で「ショップデザイン」テンプレートを選択した場合、ポップアップウィンドウのサイズが設定できます。</div>
<div class="bd" style="left:332px;top:2650px">8</div><div class="l" style="left:366px;top:2651px">入力内容を保存します。</div>
<div class="bd" style="left:332px;top:2688px">9</div><div class="bd" style="left:370px;top:2688px">6</div><div class="l" style="left:396px;top:2689px">の入力内容を削除します。</div>

<div class="tg" style="left:335px;width:65px">お知らせ</div><div class="tg" style="left:406px;width:121px">インフォメーション</div><div class="tg" style="left:533px;width:110px">ショップデザイン</div>

<!-- Chat banner -->
<div class="box" style="left:990px;top:918px;width:200px;height:82px;background:#ebede6"></div>
<svg class="a" style="left:990px;top:918px" width="214" height="82"><path d="M44 10H196V79H44C20 79 4 62 4 42C4 24 20 10 44 10Z" fill="#4f6fdc"/><rect x="50" y="47" width="148" height="33" fill="#fff" stroke="#4f6fdc" stroke-width="2"/><path d="M50 80C43 70 46 60 50 47" fill="#4f6fdc"/><rect x="10" y="28" width="42" height="36" rx="12" fill="#dfe6fb"/><rect x="29" y="14" width="3" height="16" fill="#fff"/><circle cx="30.500" cy="13" r="3" fill="#fff"/><circle cx="22" cy="38" r="2.500" fill="#2a4ba8"/><circle cx="40" cy="38" r="2.500" fill="#2a4ba8"/><text x="31" y="57" font-size="13" font-weight="700" text-anchor="middle" fill="#2a4ba8" font-family="Liberation Sans">M</text><path d="M14 82C16 72 46 72 48 82Z" fill="#fff"/><circle cx="196" cy="14" r="12.500" fill="#ffffffcc" stroke="#8a98a8" stroke-width="1.500"/><path d="M190 7L202 21M202 7L190 21" stroke="#8a98a8" stroke-width="1.300"/></svg>
<div class="t" style="left:1062px;top:937px;font-size:12px;font-weight:700;color:#fff">なにかお困りですか？</div>
<div class="t" style="left:1062px;top:970px;font-size:13px;font-weight:700;color:#4f6fdc">チャットで質問する</div>

<!-- Footer -->
<div class="box" style="left:0;top:2943px;width:1200px;height:5px;background:#3a9d62"></div>
<div class="box" style="left:0;top:2948px;width:1200px;height:586px;background:#fff"></div>
<div class="a" style="left:0;width:1194px;top:2975px;text-align:center;font-size:17.300px;line-height:28px;color:#444;white-space:nowrap">まだmakeshopのIDをお持ちでない方は、ぜひ無料体験をお試しください。</div>
<div class="a" style="left:0;width:1211px;top:3014px;text-align:center;font-size:12px;line-height:20px;color:#444;white-space:nowrap">15日間makeshopを無料体験できます</div>
<div class="box" style="left:447px;top:3036px;width:306px;height:71px;border-radius:36px;background:#e03e3e;color:#fff;font-size:15.500px;line-height:71px;text-align:center;white-space:nowrap">1分でかんたん無料体験してみる</div>

<div class="box" style="left:134px;top:3155px;width:300px;height:80px;background:#000"></div>
<div class="t" style="left:145px;top:3160px;font-size:13px;font-weight:700;color:#fff">ネットショップのプロが教える</div>
<div class="box" style="left:137px;top:3185px;width:201px;height:49px;background:#fff"></div>
<div class="box" style="left:339px;top:3155px;width:95px;height:80px;background:#0e4a9c"></div>
<div class="box" style="left:145px;top:3194px;width:52px;height:14px;background:#ffe033"></div><div class="box" style="left:145px;top:3213px;width:50px;height:14px;background:#ffe033"></div>
<div class="t" style="left:146px;top:3191px;font-size:16px;font-weight:700;color:#111">売上げ</div>
<div class="t" style="left:146px;top:3209px;font-size:16px;font-weight:700;color:#111">アップ</div>
<div class="a" style="left:207px;top:3182px;font-size:30px;font-weight:700;line-height:56px;color:#111;white-space:nowrap">ノウハウ</div>
<div class="a" style="left:361px;top:3165px;font:300 30px/34px 'Liberation Sans',sans-serif;color:#fff;letter-spacing:1px">EC</div>
<div class="t" style="left:361px;top:3193px;font-size:12.500px;font-weight:700;color:#fff">運営代行</div>
<div class="a" style="left:387px;top:3207px;font:700 7px/12px 'Liberation Sans',sans-serif;color:#fff">by GMO</div>
<svg class="a" style="left:418px;top:3220px" width="14" height="14"><path d="M12 1V13H1Z" fill="#fff"/></svg>

<div class="box" style="left:450px;top:3155px;width:300px;height:80px;background:#d55d4c"></div>
<div class="box" style="left:656px;top:3157px;width:92px;height:76px;background:#fff"></div>
<div class="t" style="left:461px;top:3161px;font-size:13px;font-weight:700;color:#f7d64b;transform-origin:0 50%;transform:scaleX(.9)">HTMLサポートメンバーが教える</div>
<div class="t" style="left:462px;top:3180px;font-size:19px;font-weight:700;color:#fff">makeshopの</div>
<div class="t" style="left:460px;top:3205px;font-size:22.500px;font-weight:700;color:#fff">デザインノウハウ</div>
<svg class="a" style="left:691px;top:3170px" width="22" height="16"><path d="M1 0L11 7L21 0V16L11 8L1 16Z" fill="#13497a"/></svg>
<div class="t" style="left:665px;top:3187px;font-size:15px;font-weight:700;color:#222;letter-spacing:-.4px">makeshop</div>
<div class="t" style="left:673px;top:3202px;font-size:15px;color:#2b9bd1">support</div>

<div class="box" style="left:766px;top:3155px;width:300px;height:80px;background:#35a9c4"></div>
<div class="box" style="left:972px;top:3157px;width:92px;height:76px;background:#fff"></div>
<div class="t" style="left:777px;top:3161px;font-size:12px;font-weight:700;color:#f7e04b">makeshop社員が教える</div>
<div class="t" style="left:778px;top:3180px;font-size:18.500px;font-weight:700;color:#fff">makeshopやECの</div>
<div class="t" style="left:777px;top:3205px;font-size:18px;font-weight:700;color:#fff">最新ニュースをお届け</div>
<svg class="a" style="left:1007px;top:3170px" width="22" height="16"><path d="M1 0L11 7L21 0V16L11 8L1 16Z" fill="#13497a"/></svg>
<div class="t" style="left:981px;top:3187px;font-size:15px;font-weight:700;color:#222;letter-spacing:-.4px">makeshop</div>
<div class="t" style="left:985px;top:3202px;font-size:14px;color:#2b9bd1">magazine</div>

<svg class="a" style="left:604px;top:3274px" width="100" height="46"><path d="M6 9L16 24M14 5L26 26M3 20L12 30" stroke="#1d9aa8" stroke-width="2.500"/><rect x="34" y="0" width="1" height="32" fill="#ccc"/><text x="46" y="10" font-size="10" font-weight="700" fill="#1b6db0" font-family="Liberation Sans">GMO</text><text x="36" y="19" font-size="6.500" fill="#888" font-family="Liberation Sans">CYBER SECURITY</text><text x="46" y="31" font-size="8" fill="#444" font-family="Liberation Sans">by IERAE</text><path d="M88 39l5-2 5 2v3c0 3-3 5-5 6-2-1-5-3-5-6z" fill="#2268b8"/></svg>
<div class="a" style="left:605px;top:3308px;font-size:7px;line-height:12px;color:#666;white-space:nowrap">サイバー攻撃対策サイト</div>

<div class="a" style="left:0;width:1199px;top:3371px;text-align:center;font-size:13px;line-height:20px;color:#444;text-decoration:underline">Cookieポリシー</div>
<div class="a" style="left:424px;top:3391px;font-size:12px;line-height:20px;color:#444;white-space:nowrap">Copyright © 2024 GMO MAKESHOP Co. Ltd. All Rights Reserved.</div>
<div class="box" style="left:0;top:3409px;width:1200px;height:1px;background:#ddd"></div>
<div class="a" style="left:10px;top:3419px;font:700 18px/22px 'Liberation Sans',sans-serif;color:#0e5aa5;letter-spacing:-.8px;white-space:nowrap">GMO<span style="font-weight:400;color:#777;font-size:16.500px;letter-spacing:-1px">INTERNET GROUP</span></div>
<div class="t" style="left:750px;top:3421px;font-size:12.200px;font-weight:700;color:#1c63ad">当社はGMOインターネットグループ（東証プライム上場9449）のメンバーです。</div>
<div class="t" style="left:10px;top:3458px;font-size:12px;font-weight:700;color:#444">グループサービス</div>
<div class="lk" style="left:10px">ネットで情報発信</div><div class="lk" style="left:106px">ネットの安心</div><div class="lk" style="left:183px">ネット・店舗の決済</div><div class="lk" style="left:288px">ネットで買物</div><div class="lk" style="left:365px">ショップを開設</div><div class="lk" style="left:452px">ビジネスを支援</div><div class="lk" style="left:538px">ネットを楽しむ</div><div class="lk" style="left:626px">マーケティングを支援</div><div class="lk" style="left:739px">ネットで金融</div>

</body></html>
